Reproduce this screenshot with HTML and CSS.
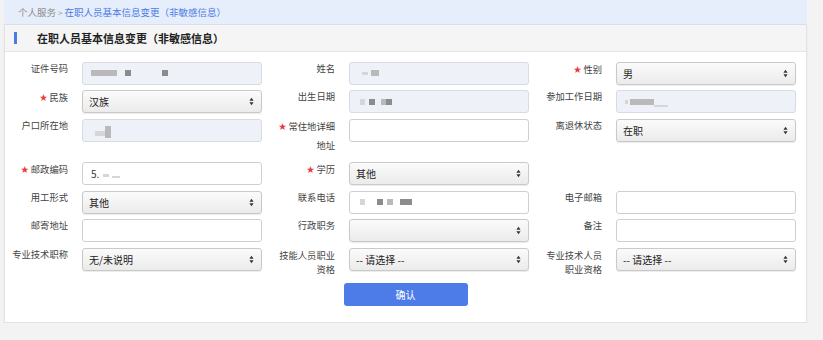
FILE: index.html
```html
<!DOCTYPE html>
<html lang="zh-CN">
<head>
<meta charset="utf-8">
<title>在职人员基本信息变更（非敏感信息）</title>
<link rel="stylesheet" href="styles.css">
</head>
<body>
<div class="page">
  <div class="crumb">
    <span class="crumb-muted">个人服务</span><span class="crumb-sep">&gt;</span><span class="crumb-link">在职人员基本信息变更（非敏感信息）</span>
  </div>
  <div class="panel">
    <div class="panel-head"><i class="marker"></i><span>在职人员基本信息变更（非敏感信息）</span></div>
    <div class="form">
      <div class="row">
        <div class="field"><label class="lbl">证件号码</label><div class="ctl ro"><i class="blk b1" style="width:26px"></i><i class="blk b2" style="width:6px;margin-left:8px"></i><i class="blk b2" style="width:6px;margin-left:31px"></i></div></div>
        <div class="field"><label class="lbl">姓名</label><div class="ctl ro"><i class="blk b0" style="width:6px;margin-left:4px;height:3px"></i><i class="blk b1" style="width:8px;margin-left:3px"></i></div></div>
        <div class="field"><label class="lbl"><b class="req">★</b>性别</label><div class="ctl sel"><span>男</span><svg class="arr" viewBox="0 0 6 10"><path d="M3 0.5L5.5 4H0.5z M3 9.5L5.5 6H0.5z"/></svg></div></div>
      </div>
      <div class="row">
        <div class="field"><label class="lbl"><b class="req">★</b>民族</label><div class="ctl sel"><span>汉族</span><svg class="arr" viewBox="0 0 6 10"><path d="M3 0.5L5.5 4H0.5z M3 9.5L5.5 6H0.5z"/></svg></div></div>
        <div class="field"><label class="lbl">出生日期</label><div class="ctl ro"><i class="blk b0" style="width:5px;margin-left:2px"></i><i class="blk b2" style="width:6px;margin-left:4px"></i><i class="blk b1" style="width:5px;margin-left:6px"></i><i class="blk b2" style="width:6px"></i></div></div>
        <div class="field"><label class="lbl">参加工作日期</label><div class="ctl ro"><i class="blk b0" style="width:3px;height:4px"></i><i class="blk b1" style="width:24px;margin-left:2px"></i><i class="blk b0" style="width:14px;height:2px;margin-top:8px"></i></div></div>
      </div>
      <div class="row">
        <div class="field"><label class="lbl">户口所在地</label><div class="ctl ro"><i class="blk b0" style="width:10px;height:5px;margin-left:4px;margin-top:6px"></i><i class="blk b1" style="width:6px;height:12px;margin-top:4px"></i></div></div>
        <div class="field"><label class="lbl"><b class="req">★</b>常住地详细<br>地址</label><div class="ctl inp"></div></div>
        <div class="field"><label class="lbl">离退休状态</label><div class="ctl sel"><span>在职</span><svg class="arr" viewBox="0 0 6 10"><path d="M3 0.5L5.5 4H0.5z M3 9.5L5.5 6H0.5z"/></svg></div></div>
      </div>
      <div class="row">
        <div class="field"><label class="lbl"><b class="req">★</b>邮政编码</label><div class="ctl inp"><span class="val">5.</span><i class="blk b0" style="width:6px;height:3px;margin-left:4px;margin-top:4px"></i><i class="blk b0" style="width:8px;height:2px;margin-left:3px;margin-top:6px"></i></div></div>
        <div class="field"><label class="lbl"><b class="req">★</b>学历</label><div class="ctl sel"><span>其他</span><svg class="arr" viewBox="0 0 6 10"><path d="M3 0.5L5.5 4H0.5z M3 9.5L5.5 6H0.5z"/></svg></div></div>
        <div class="field"></div>
      </div>
      <div class="row">
        <div class="field"><label class="lbl">用工形式</label><div class="ctl sel"><span>其他</span><svg class="arr" viewBox="0 0 6 10"><path d="M3 0.5L5.5 4H0.5z M3 9.5L5.5 6H0.5z"/></svg></div></div>
        <div class="field"><label class="lbl">联系电话</label><div class="ctl inp"><i class="blk b0" style="width:5px;margin-left:2px"></i><i class="blk b2" style="width:6px;margin-left:12px"></i><i class="blk b1" style="width:6px;margin-left:4px"></i><i class="blk b2" style="width:12px;margin-left:7px"></i></div></div>
        <div class="field"><label class="lbl">电子邮箱</label><div class="ctl inp"></div></div>
      </div>
      <div class="row">
        <div class="field"><label class="lbl">邮寄地址</label><div class="ctl inp"></div></div>
        <div class="field"><label class="lbl">行政职务</label><div class="ctl sel"><span></span><svg class="arr" viewBox="0 0 6 10"><path d="M3 0.5L5.5 4H0.5z M3 9.5L5.5 6H0.5z"/></svg></div></div>
        <div class="field"><label class="lbl">备注</label><div class="ctl inp"></div></div>
      </div>
      <div class="row last">
        <div class="field"><label class="lbl">专业技术职称</label><div class="ctl sel"><span>无/未说明</span><svg class="arr" viewBox="0 0 6 10"><path d="M3 0.5L5.5 4H0.5z M3 9.5L5.5 6H0.5z"/></svg></div></div>
        <div class="field"><label class="lbl tight">技能人员职业<br>资格</label><div class="ctl sel"><span>-- 请选择 --</span><svg class="arr" viewBox="0 0 6 10"><path d="M3 0.5L5.5 4H0.5z M3 9.5L5.5 6H0.5z"/></svg></div></div>
        <div class="field"><label class="lbl tight">专业技术人员<br>职业资格</label><div class="ctl sel"><span>-- 请选择 --</span><svg class="arr" viewBox="0 0 6 10"><path d="M3 0.5L5.5 4H0.5z M3 9.5L5.5 6H0.5z"/></svg></div></div>
      </div>
      <div class="actions"><button class="btn" type="button">确认</button></div>
    </div>
  </div>
</div>
</body>
</html>
```
FILE: styles.css
```css
html, body {
  margin: 0;
  padding: 0;
  background: #f3f3f3;
  font-family: "Noto Sans CJK SC", "Noto Sans", sans-serif;
  font-size: 10px;
  color: #333;
}
.page {
  width: 803px;
  margin-left: 4px;
}
.crumb {
  height: 24px;
  line-height: 25px;
  background: #e6edfb;
  border-bottom: 1px solid #d9dfec;
  padding-left: 14px;
  font-size: 9.5px;
}
.crumb-muted { color: #8e8e8e; }
.crumb-sep { color: #9a9a9a; margin: 0 2px; font-size: 8px; }
.crumb-link { color: #4a7ce6; }
.panel {
  background: #fff;
  border: 1px solid #e3e3e3;
  border-top: none;
  box-shadow: 0 1px 2px rgba(0,0,0,0.06);
}
.panel-head {
  height: 26px;
  background: #f5f5f5;
  border-bottom: 1px solid #e6e6e6;
  display: flex;
  align-items: center;
  font-size: 11px;
  font-weight: bold;
  color: #222;
}
.marker {
  display: block;
  width: 3px;
  height: 12px;
  background: #4a7ce6;
  margin-left: 9px;
  margin-right: 20px;
}
.form {
  padding: 6.5px 0 16px;
}
.row {
  display: grid;
  grid-template-columns: repeat(3, 1fr);
  margin-bottom: 2.5px;
}
.field {
  display: grid;
  grid-template-columns: 63px 180px;
  column-gap: 14px;
  align-items: start;
}
.lbl {
  text-align: right;
  line-height: 19px;
  padding-bottom: 2px;
  color: #444;
  font-size: 9.3px;
  white-space: nowrap;
}
.lbl.tight {
  line-height: 14px;
  padding-top: 3px;
}
.req {
  color: #e43a3a;
  font-size: 8px;
  font-weight: normal;
  margin-right: 2px;
  vertical-align: 1px;
}
.ctl {
  box-sizing: border-box;
  height: 23px;
  margin-top: 3px;
  border: 1px solid #cfcfcf;
  border-radius: 3px;
  display: flex;
  align-items: center;
  padding: 0 7px;
  font-size: 10px;
  color: #222;
}
.ro {
  background: #eef2f8;
  border-color: #d7dbe2;
  padding-left: 8px;
}
.inp {
  background: #fff;
  padding-left: 8px;
}
.sel {
  background: linear-gradient(#fbfbfb, #ebebeb);
  border-color: #c9c9c9;
  box-shadow: 0 1px 1px rgba(0,0,0,0.08);
  justify-content: space-between;
  padding: 0 7px 0 6px;
}
.arr {
  width: 5px;
  height: 9px;
  fill: #333;
}
.blk {
  display: block;
  height: 6px;
  filter: blur(0.7px);
  flex: none;
}
.b0 { background: #d6d6d6; }
.b1 { background: #b9b9b9; }
.b2 { background: #8c8c8c; }
.val { color: #333; }
.actions {
  display: flex;
  justify-content: center;
  margin-top: 5px;
}
.btn {
  width: 124px;
  height: 23px;
  border: none;
  border-radius: 3px;
  background: #4d7ce8;
  color: #fff;
  font-family: "Noto Sans CJK SC", sans-serif;
  font-size: 10px;
  padding: 0;
}
```
